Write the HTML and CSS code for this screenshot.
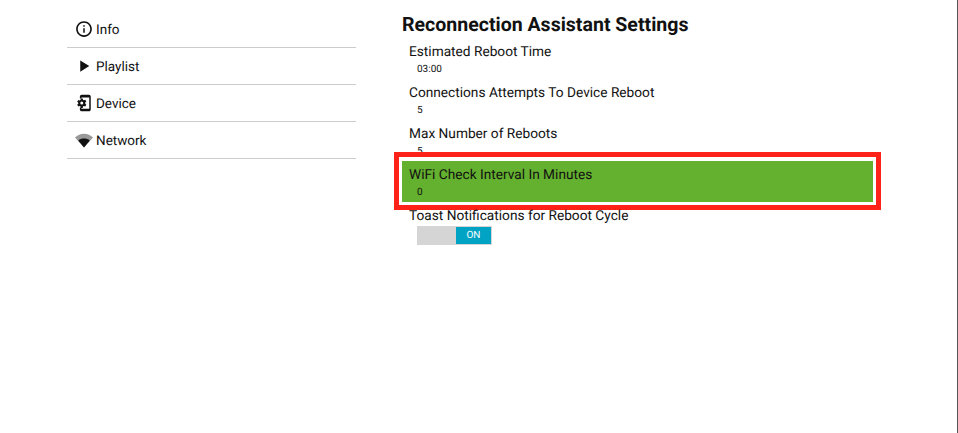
FILE: index.html
```html
<!DOCTYPE html>
<html lang="en">
<head>
  <meta charset="UTF-8">
  <meta name="viewport" content="width=device-width, initial-scale=1.0">
  <title>Reconnection Assistant Settings</title>
  <link rel="stylesheet" href="styles.css">
</head>
<body>
  <div class="page">

    <!-- Side menu -->
    <nav class="side-menu">
      <a class="menu-item">
        <svg class="menu-icon" viewBox="0 0 24 24"><path d="M11 7h2v2h-2zm0 4h2v6h-2zm1-9.500C6.200 1.500 1.500 6.200 1.500 12S6.200 22.500 12 22.500 22.500 17.800 22.500 12 17.800 1.500 12 1.500zm0 18.800c-4.600 0-8.300-3.700-8.300-8.300S7.400 3.700 12 3.700s8.300 3.700 8.300 8.300-3.700 8.300-8.300 8.300z"/></svg>
        <span>Info</span>
      </a>
      <a class="menu-item">
        <svg class="menu-icon" viewBox="0 0 24 24"><path d="M7 4.500v15l12-7.500z"/></svg>
        <span>Playlist</span>
      </a>
      <a class="menu-item">
        <svg class="menu-icon" viewBox="0 0 24 24"><path d="M9 1h9.500C19.900 1 21 2.100 21 3.500v17c0 1.400-1.100 2.500-2.500 2.500H9c-1.400 0-2.500-1.100-2.500-2.500V18h2v1.500h10.500v-15H8.500V6h-2V3.500C6.500 2.100 7.600 1 9 1z"/><path d="M13.600 12.700c0-.2.100-.5.100-.7s0-.5-.1-.7l1.500-1.200-1.500-2.500-1.800.7c-.4-.3-.8-.5-1.200-.7L10.300 6H7.700l-.3 1.900c-.4.2-.8.400-1.200.7l-1.800-.7-1.500 2.500 1.500 1.200c0 .2-.1.500-.1.700s0 .5.100.7l-1.500 1.200 1.500 2.500 1.800-.7c.4.300.8.500 1.200.7l.3 1.900h2.600l.3-1.900c.4-.2.800-.4 1.200-.7l1.800.7 1.500-2.500zM9 14a2 2 0 1 1 0-4 2 2 0 0 1 0 4z"/></svg>
        <span>Device</span>
      </a>
      <a class="menu-item">
        <svg class="menu-icon" viewBox="0 0 24 24"><path class="wifi-back" d="M12 22L0 8.500C3.200 5.400 7.400 3.500 12 3.500s8.800 1.900 12 5z"/><path d="M12 22L4.300 12.500C6.500 10.900 9.100 10 12 10s5.500.9 7.700 2.500z"/></svg>
        <span>Network</span>
      </a>
    </nav>

    <!-- Settings -->
    <main class="settings">
      <h1>Reconnection Assistant Settings</h1>
      <div class="setting">
        <div class="setting-label">Estimated Reboot Time</div>
        <div class="setting-value">03:00</div>
      </div>
      <div class="setting">
        <div class="setting-label">Connections Attempts To Device Reboot</div>
        <div class="setting-value">5</div>
      </div>
      <div class="setting">
        <div class="setting-label">Max Number of Reboots</div>
        <div class="setting-value">5</div>
      </div>
      <div class="setting selected">
        <div class="setting-label">WiFi Check Interval In Minutes</div>
        <div class="setting-value">0</div>
      </div>
      <div class="setting">
        <div class="setting-label">Toast Notifications for Reboot Cycle</div>
        <div class="toggle"><span class="toggle-on">ON</span></div>
      </div>
    </main>

  </div>
</body>
</html>
```

FILE: styles.css
```css
html, body {
  margin: 0;
  padding: 0;
  height: 100%;
  background-color: white;
}

body {
  font-family: Roboto, "Liberation Sans", sans-serif;
  color: #111;
  text-rendering: geometricPrecision;
  overflow: hidden;
}

.page {
  display: flex;
  box-sizing: border-box;
  height: 100%;
  padding: 11px 0 0 67px;
  border-right: 1px solid #555;
}

.side-menu {
  width: 289px;
  margin-right: 46px;
}

.menu-item {
  display: flex;
  align-items: center;
  height: 36px;
  border-bottom: 1px solid #ccc;
  font-size: 13.5px;
}

.menu-item span {
  padding-top: 2px;
}

.menu-icon {
  width: 18px;
  height: 18px;
  margin: 0 3px 0 8px;
  fill: #111;
}

.wifi-back {
  fill: #999;
}

.settings {
  width: 471px;
}

h1 {
  margin: 0 0 2px;
  height: 25px;
  font-size: 19.55px;
  line-height: 28px;
  font-weight: bold;
  color: #111;
}

.setting {
  position: relative;
  height: 41px;
  padding-left: 7px;
}

.setting-label {
  padding-top: 6px;
  font-size: 13.7px;
  line-height: 17px;
}

.setting-value {
  padding: 3px 0 0 8px;
  font-size: 10px;
  line-height: 12px;
}

.selected {
  background-color: #64b02f;
}

/* red highlight drawn around the selected row */
.selected::after {
  content: "";
  position: absolute;
  top: -9px;
  left: -8px;
  right: -8px;
  bottom: -8px;
  border: 5px solid #ff2218;
}

.toggle {
  display: flex;
  justify-content: flex-end;
  width: 75px;
  height: 19px;
  margin: 1px 0 0 8px;
  background-color: #d5d5d5;
}

.toggle-on {
  width: 35px;
  height: 17px;
  margin: 1px 1px 0 0;
  background-color: #00a3c4;
  color: white;
  font-size: 10px;
  line-height: 17px;
  text-align: center;
}
```
